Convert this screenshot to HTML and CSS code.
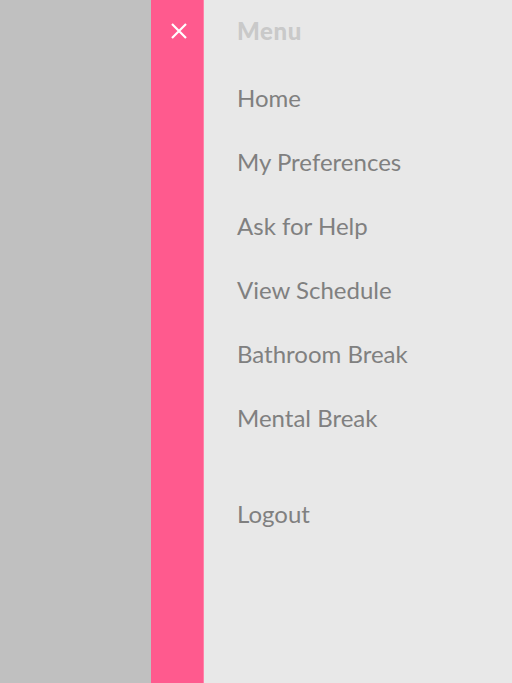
FILE: index.html
```html
<!DOCTYPE html>
<html>
<head>
<meta charset="utf-8">
<link rel="stylesheet" href="styles.css">
</head>
<body>
<div class="app">
  <div class="backdrop"></div>
  <div class="strip">
    <button class="close" aria-label="Close">
      <svg width="18" height="18" viewBox="0 0 18 18"><path d="M2 2L16 16M16 2L2 16" stroke="#fff" stroke-width="2.2" fill="none"/></svg>
    </button>
  </div>
  <nav class="menu">
    <div class="title">Menu</div>
    <a class="item">Home</a>
    <a class="item">My Preferences</a>
    <a class="item">Ask for Help</a>
    <a class="item">View Schedule</a>
    <a class="item">Bathroom Break</a>
    <a class="item">Mental Break</a>
    <a class="item logout">Logout</a>
  </nav>
</div>
</body>
</html>
```
FILE: styles.css
```css
html, body { margin: 0; padding: 0; height: 100%; }
body { font-family: "Lato", "Open Sans", sans-serif; }
.app { display: flex; height: 683px; width: 512px; overflow: hidden; }
.backdrop { width: 151px; background: #c0c0c0; }
.strip { width: 52px; background: #ff5a8e; border-right: 1px solid #ff80a8; display: flex; justify-content: center; align-items: flex-start; }
.close { margin: 22px 0 0 3px; background: none; border: 0; padding: 0; width: 18px; height: 18px; cursor: pointer; }
.close svg { display: block; }
.menu { flex: 1; background: #e8e8e8; padding: 15px 0 0 33px; display: flex; flex-direction: column; }
.title { font-size: 24px; font-weight: 900; color: #c9c9c9; line-height: 32px; height: 32px; margin-bottom: 35px; letter-spacing: 0.6px; }
.item { font-size: 24px; color: #808080; line-height: 32px; height: 32px; margin-bottom: 32px; }
.logout { margin-top: 32px; }
```
